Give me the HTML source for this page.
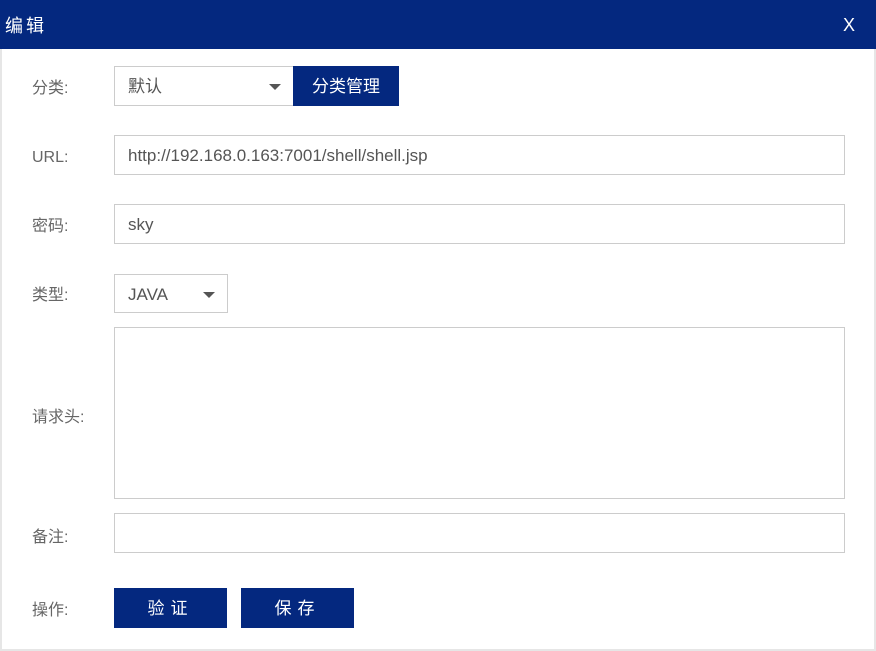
<!DOCTYPE html>
<html><head><meta charset="utf-8"><style>
*{margin:0;padding:0;box-sizing:border-box}
body{width:876px;height:651px;background:#fff;font-family:"Liberation Sans","Noto Sans CJK SC",sans-serif;position:relative;overflow:hidden}
.hd{position:absolute;left:0;top:0;width:876px;height:49px;background:#04287f;color:#fff;font-size:18px}
.hd .t{position:absolute;left:5px;top:12px;letter-spacing:3px}
.hd .x{position:absolute;right:21px;top:15px;font-size:18px}
.frame{position:absolute;left:0;top:49px;width:876px;height:602px;border:2px solid #e6e6e6;border-top:none}
.lb{position:absolute;left:32px;font-size:16px;color:#666;line-height:20px;height:20px}
.in{position:absolute;border:1px solid #ccc;background:#fff;font-size:17px;color:#555;padding-left:13px;line-height:40px}
.arr{position:absolute;width:0;height:0;border-left:6px solid transparent;border-right:6px solid transparent;border-top:6px solid #555}
.btn{position:absolute;background:#04287f;color:#fff;font-size:17px;text-align:center;line-height:41px}
</style></head><body>
<div class="hd"><span class="t">编辑</span><span class="x">X</span></div>
<div class="frame"></div>
<div class="lb" style="top:79px">分类:</div>
<div class="in" style="left:114px;top:66px;width:180px;height:40px">默认<div class="arr" style="left:154px;top:17px"></div></div>
<div class="btn" style="left:293px;top:66px;width:106px;height:40px">分类管理</div>
<div class="lb" style="top:148px">URL:</div>
<div class="in" style="left:114px;top:135px;width:731px;height:40px">http://192.168.0.163:7001/shell/shell.jsp</div>
<div class="lb" style="top:217px">密码:</div>
<div class="in" style="left:114px;top:204px;width:731px;height:40px">sky</div>
<div class="lb" style="top:286px">类型:</div>
<div class="in" style="left:114px;top:274px;width:114px;height:39px;line-height:39px">JAVA<div class="arr" style="left:88px;top:17px"></div></div>
<div class="lb" style="top:408px">请求头:</div>
<div class="in" style="left:114px;top:327px;width:731px;height:172px"></div>
<div class="lb" style="top:528px">备注:</div>
<div class="in" style="left:114px;top:513px;width:731px;height:40px"></div>
<div class="lb" style="top:601px">操作:</div>
<div class="btn" style="left:114px;top:588px;width:113px;height:40px;letter-spacing:6px">验证</div>
<div class="btn" style="left:241px;top:588px;width:113px;height:40px;letter-spacing:6px">保存</div>
</body></html>
